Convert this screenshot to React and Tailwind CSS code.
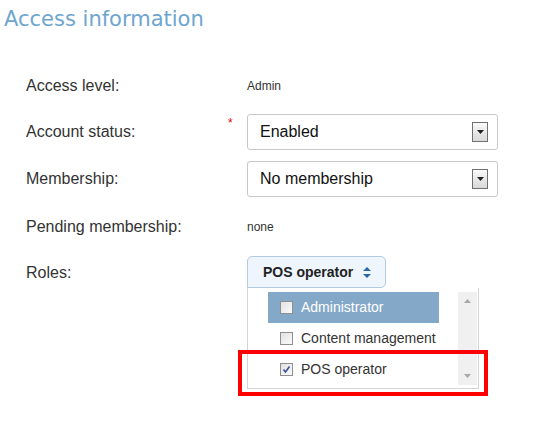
import React from 'react';

const arial = { fontFamily: '"Liberation Sans", Arial, sans-serif' };

const SelectBox = ({ value }) => (
  <div className="flex h-[36px] w-[251px] items-center justify-between rounded-[3px] border border-[#c8c8c8] bg-white pl-[12px] pr-[9px]">
    <span className="text-[16px] text-[#111]">{value}</span>
    <span className="flex h-[20px] w-[16px] items-center justify-center border border-[#707070] bg-gradient-to-b from-[#fafafa] to-[#d8d8d8]">
      <svg width="7" height="4" viewBox="0 0 7 4"><path d="M0 0h7L3.5 4z" fill="#222" /></svg>
    </span>
  </div>
);

const Checkbox = ({ checked }) => (
  <span className="flex h-[13px] w-[13px] items-center justify-center border border-[#8f8f8f] bg-gradient-to-br from-[#e2e2e2] to-[#fbfbfb]">
    {checked && (
      <svg width="9" height="9" viewBox="0 0 9 9"><path d="M1.5 4.5l2 2.5L7.5 1.5" stroke="#3a4f9c" strokeWidth="1.6" fill="none" /></svg>
    )}
  </span>
);

const Row = ({ label, children, required, className }) => (
  <div className={`flex items-center ${className || ''}`}>
    <div className="relative w-[221px] text-[16px] text-[#333]">
      {label}
      {required && <span className="absolute left-[202px] top-[-6px] text-[12px] text-[#e00]">*</span>}
    </div>
    {children}
  </div>
);

export default function App() {
  return (
    <div className="h-[443px] w-[535px] bg-white" style={arial}>
      <h1 className="pl-[4px] pt-[5px] text-[21px] leading-[28px] text-[#6ea6cf]" style={{ fontFamily: '"DejaVu Sans", Verdana, sans-serif' }}>
        Access information
      </h1>
      <div className="pl-[26px]">
        <Row label="Access level:" className="mt-[43px] h-[20px]">
          <span className="text-[12px] text-[#333]">Admin</span>
        </Row>
        <Row label="Account status:" required className="mt-[18px]">
          <SelectBox value="Enabled" />
        </Row>
        <Row label="Membership:" className="mt-[11px]">
          <SelectBox value="No membership" />
        </Row>
        <Row label="Pending membership:" className="mt-[20px] h-[20px]">
          <span className="text-[12px] text-[#333]">none</span>
        </Row>
        <div className="mt-[19px] flex">
          <div className="w-[221px] pt-[5px] text-[16px] text-[#333]">Roles:</div>
          <div className="relative">
            <div className="flex h-[32px] w-[139px] items-center gap-[10px] rounded-t-[5px] rounded-br-[5px] border border-[#b5cbe0] bg-[#eef5fd] pl-[15px] text-[14px] font-bold text-[#222]">
              POS operator
              <svg width="8" height="11" viewBox="0 0 8 11"><path d="M4 0L8 4H0z M4 11L0 7h8z" fill="#2d67a8" /></svg>
            </div>
            <div className="flex h-[101px] w-[232px] border border-t-0 border-[#d4d4d4] bg-white pl-[20px] pt-[4px]">
              <div className="w-[171px]">
                <div className="flex h-[31px] items-center gap-[8px] bg-[#84a8c8] pl-[12px] text-[14px] text-white">
                  <Checkbox /> Administrator
                </div>
                <div className="flex h-[31px] items-center gap-[8px] pl-[12px] text-[14px] text-[#333]">
                  <Checkbox /> Content management
                </div>
                <div className="flex h-[31px] items-center gap-[8px] pl-[12px] text-[14px] text-[#333]">
                  <Checkbox checked /> POS operator
                </div>
              </div>
              <div className="ml-[19px] flex h-[93px] w-[19px] flex-col items-center justify-between bg-[#f0f0f0] py-[7px]">
                <svg width="7" height="4" viewBox="0 0 7 4"><path d="M3.5 0L7 4H0z" fill="#a8a8a8" /></svg>
                <svg width="7" height="4" viewBox="0 0 7 4"><path d="M0 0h7L3.5 4z" fill="#a8a8a8" /></svg>
              </div>
            </div>
            <div className="absolute left-[-9px] top-[94px] h-[46px] w-[250px] border-[4px] border-[#ff0000]" />
          </div>
        </div>
      </div>
    </div>
  );
}
